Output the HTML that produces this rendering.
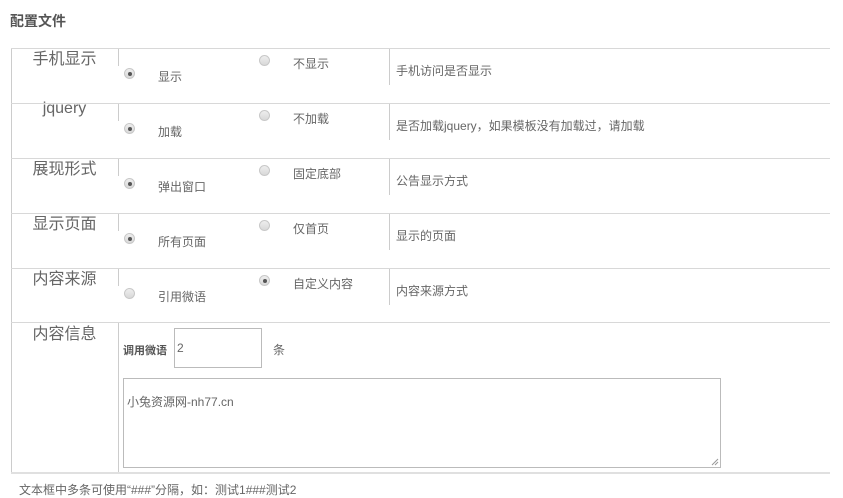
<!DOCTYPE html>
<html><head><meta charset="utf-8"><style>
body{margin:0;width:843px;height:498px;background:#fff;position:relative;overflow:hidden;font-family:"Liberation Sans","Noto Sans CJK SC",sans-serif;color:#666}
.a{position:absolute;white-space:nowrap}
.h{height:1px;background:#d8d8d8;left:11px;width:819px}
.v{width:1px;background:#ccc}
.lab{font-size:16px;color:#666;width:107px;text-align:center;left:11px}
.t{font-size:12px;color:#666}
.r{width:9px;height:9px;border-radius:50%;border:1px solid #c8c8c8;background:linear-gradient(#eee,#d8d8d8)}
.r.on::after{content:"";position:absolute;left:2.5px;top:2.5px;width:4px;height:4px;border-radius:50%;background:#555}
</style></head><body>
<div class="a" style="left:10px;top:11px;font-size:14px;font-weight:bold;color:#555">配置文件</div>
<div class="a" style="left:11px;top:48px;width:1px;height:425px;background:#ccc"></div>

<div class="a h" style="top:48px"></div>
<div class="a h" style="top:103px"></div>
<div class="a h" style="top:158px"></div>
<div class="a h" style="top:213px"></div>
<div class="a h" style="top:268px"></div>
<div class="a h" style="top:322px"></div>
<div class="a h" style="top:472px;height:2px;background:#e0e0e0"></div>

<div class="a lab" style="top:45px">手机显示</div>
<div class="a v" style="left:118px;top:49px;height:17px"></div>
<div class="a r on" style="left:124px;top:68px"></div><div class="a t" style="left:158px;top:68px">显示</div>
<div class="a r" style="left:259px;top:55px"></div><div class="a t" style="left:293px;top:55px">不显示</div>
<div class="a v" style="left:389px;top:49px;height:36px"></div><div class="a t" style="left:396px;top:62px">手机访问是否显示</div>

<div class="a lab" style="top:100px">jquery</div>
<div class="a v" style="left:118px;top:104px;height:17px"></div>
<div class="a r on" style="left:124px;top:123px"></div><div class="a t" style="left:158px;top:123px">加载</div>
<div class="a r" style="left:259px;top:110px"></div><div class="a t" style="left:293px;top:110px">不加载</div>
<div class="a v" style="left:389px;top:104px;height:36px"></div><div class="a t" style="left:396px;top:117px">是否加载jquery，如果模板没有加载过，请加载</div>

<div class="a lab" style="top:155px">展现形式</div>
<div class="a v" style="left:118px;top:159px;height:17px"></div>
<div class="a r on" style="left:124px;top:178px"></div><div class="a t" style="left:158px;top:178px">弹出窗口</div>
<div class="a r" style="left:259px;top:165px"></div><div class="a t" style="left:293px;top:165px">固定底部</div>
<div class="a v" style="left:389px;top:159px;height:36px"></div><div class="a t" style="left:396px;top:172px">公告显示方式</div>

<div class="a lab" style="top:210px">显示页面</div>
<div class="a v" style="left:118px;top:214px;height:17px"></div>
<div class="a r on" style="left:124px;top:233px"></div><div class="a t" style="left:158px;top:233px">所有页面</div>
<div class="a r" style="left:259px;top:220px"></div><div class="a t" style="left:293px;top:220px">仅首页</div>
<div class="a v" style="left:389px;top:214px;height:36px"></div><div class="a t" style="left:396px;top:227px">显示的页面</div>

<div class="a lab" style="top:265px">内容来源</div>
<div class="a v" style="left:118px;top:269px;height:17px"></div>
<div class="a r" style="left:124px;top:288px"></div><div class="a t" style="left:158px;top:288px">引用微语</div>
<div class="a r on" style="left:259px;top:275px"></div><div class="a t" style="left:293px;top:275px">自定义内容</div>
<div class="a v" style="left:389px;top:269px;height:36px"></div><div class="a t" style="left:396px;top:282px">内容来源方式</div>

<div class="a lab" style="top:320px">内容信息</div>
<div class="a v" style="left:118px;top:323px;height:149px"></div>
<div class="a" style="left:123px;top:342px;font-size:11px;font-weight:bold;color:#555">调用微语</div>
<div class="a" style="left:174px;top:328px;width:88px;height:40px;border:1px solid #bbb;box-sizing:border-box"></div>
<div class="a t" style="left:177px;top:341px">2</div>
<div class="a t" style="left:273px;top:341px">条</div>
<div class="a" style="left:123px;top:378px;width:598px;height:90px;border:1px solid #bbb;box-sizing:border-box"></div>
<div class="a t" style="left:127px;top:393px">小兔资源网-nh77.cn</div>
<svg class="a" style="left:711px;top:458px" width="8" height="8"><path d="M1 7L7 1M4 7L7 4" stroke="#999" stroke-width="1"/></svg>
<div class="a t" style="left:19px;top:481px">文本框中多条可使用“###”分隔，如：测试1###测试2</div>
</body></html>
